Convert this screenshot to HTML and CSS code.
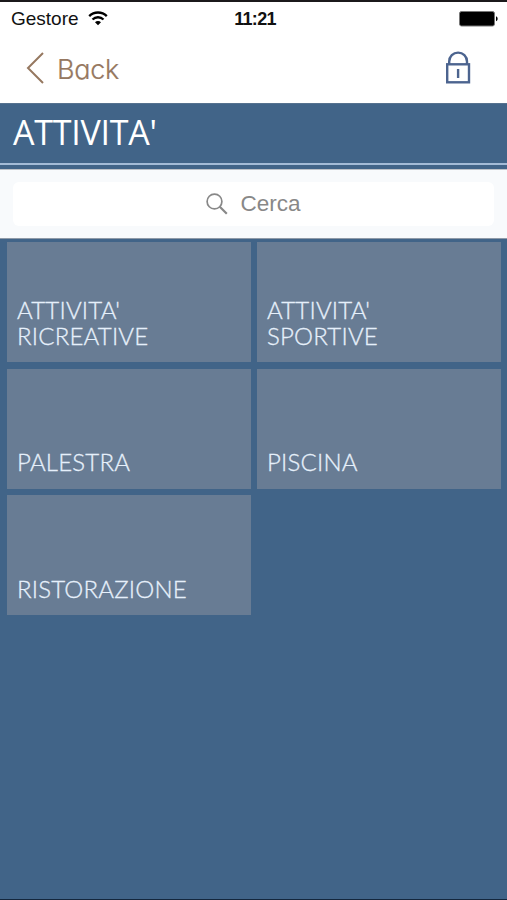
FILE: index.html
```html
<!doctype html>
<html lang="it">
    <head>
        <meta charset="utf-8"/>
        <title>Attivita'</title>
        <link rel="stylesheet" href="styles.css">
    </head>
    <body>
        <div class="status">
            <div class="carrier">
                <span class="carrier-name">Gestore</span>
                <svg width="20" height="16" viewBox="0 0 20 16" fill="none" stroke="#000" stroke-width="2.3">
                    <path d="M1.2 5.1a12.5 12.5 0 0 1 17.6 0"/>
                    <path d="M4.5 8.5a7.8 7.8 0 0 1 11 0"/>
                    <path d="M10 14.3l-3-3a4.2 4.2 0 0 1 6 0z" fill="#000" stroke="none"/>
                </svg>
            </div>
            <span class="clock">11:21</span>
            <svg class="battery" width="40" height="16" viewBox="0 0 40 16">
                <rect x=".5" y=".5" width="35" height="14.5" rx="2" stroke="#777"/>
                <path d="M37 5.2c2.2 1 2.2 4 0 5z"/>
            </svg>
        </div>
        <nav>
            <a class="back" href="#">
                <svg width="18" height="32" viewBox="0 0 18 32" fill="none" stroke="#967860" stroke-width="2">
                    <path d="M17 1L2 16l15 15"/>
                </svg>
                <span>Back</span>
            </a>
            <svg class="lock" width="26" height="34" viewBox="0 0 26 34" fill="none" stroke="#4c648f" stroke-width="2.4">
                <path d="M4.2 13.5v-3a8.9 8.9 0 0 1 17.8 0v3"/>
                <rect x="2.2" y="13.3" width="21.8" height="18"/>
                <path d="M13.1 18v9"/>
            </svg>
        </nav>
        <header>
            <h1>ATTIVITA'</h1>
        </header>
        <div class="search">
            <div class="field">
                <svg width="22" height="22" viewBox="0 0 22 22" fill="none" stroke="#888" stroke-width="1.7">
                    <circle cx="8.5" cy="8.5" r="7.4"/>
                    <path d="M13.8 13.8l7 7" stroke-width="2.2"/>
                </svg>
                <span>Cerca</span>
            </div>
        </div>
        <main>
            <a class="tile" href="#"><span>ATTIVITA'<br>RICREATIVE</span></a>
            <a class="tile" href="#"><span>ATTIVITA'<br>SPORTIVE</span></a>
            <a class="tile" href="#"><span>PALESTRA</span></a>
            <a class="tile" href="#"><span>PISCINA</span></a>
            <a class="tile" href="#"><span>RISTORAZIONE</span></a>
        </main>
    </body>
</html>
```

FILE: styles.css
```css
* {
    box-sizing: border-box;
}

body {
    display: flex;
    flex-direction: column;
    height: 900px;
    margin: 0;
    border-top: 2px solid #1b191b;
    border-bottom: 1px solid #14273d;
    background-color: #416488;
    font-family: "Liberation Sans", sans-serif;
}

a {
    color: inherit;
    text-decoration: none;
}

.status {
    display: grid;
    grid-template-columns: 1fr auto 1fr;
    align-items: center;
    height: 33px;
    padding: 0 8px 0 11px;
    background-color: #fff;
    color: #111;
    font-size: 19px;
}

.carrier {
    display: flex;
    align-items: center;
    gap: 9px;
}

.clock {
    padding-top: 1px;
    font-weight: bold;
    font-size: 18px;
    letter-spacing: -0.7px;
}

.battery {
    justify-self: end;
}

nav {
    display: flex;
    justify-content: space-between;
    align-items: center;
    height: 68px;
    padding: 0 36px 2px 26px;
    background-color: #fff;
}

.back {
    display: flex;
    align-items: center;
    gap: 13px;
    color: #967860;
    font-family: Inter, sans-serif;
    font-size: 27px;
    font-weight: 300;
    font-feature-settings: "cv11";
    letter-spacing: -0.3px;
    -webkit-text-stroke: 0.2px #967860;
}

.back span {
    padding-top: 2px;
}

header {
    height: 66px;
    border-top: 1px solid #56728f;
}

h1 {
    height: 61px;
    margin: 0;
    padding-left: 13px;
    border-bottom: 2px solid #a3bbd6;
    color: #fff;
    font: 400 34px/57px "Open Sans", sans-serif;
    letter-spacing: -0.25px;
}

.search {
    height: 70px;
    padding: 12px 13px;
    border-top: 1px solid #bfc3c9;
    border-bottom: 1px solid #8f9aa8;
    background-color: #f8fafc;
}

.field {
    display: flex;
    justify-content: center;
    align-items: center;
    gap: 12px;
    height: 44px;
    border-radius: 6px;
    background-color: #fff;
    color: #888;
    font-size: 22.5px;
}

main {
    display: grid;
    grid-template-columns: 1fr 1fr;
    grid-auto-rows: 120px;
    gap: 6.5px 6px;
    padding: 3px 6px 0 7px;
}

.tile {
    display: flex;
    align-items: flex-end;
    padding: 0 10px 14px;
    background-color: #687c94;
    color: #e6f0fb;
    font: 300 24px/25.5px Lato, sans-serif;
    letter-spacing: 0.2px;
    -webkit-text-stroke: 0.3px #e6f0fb;
}
```
